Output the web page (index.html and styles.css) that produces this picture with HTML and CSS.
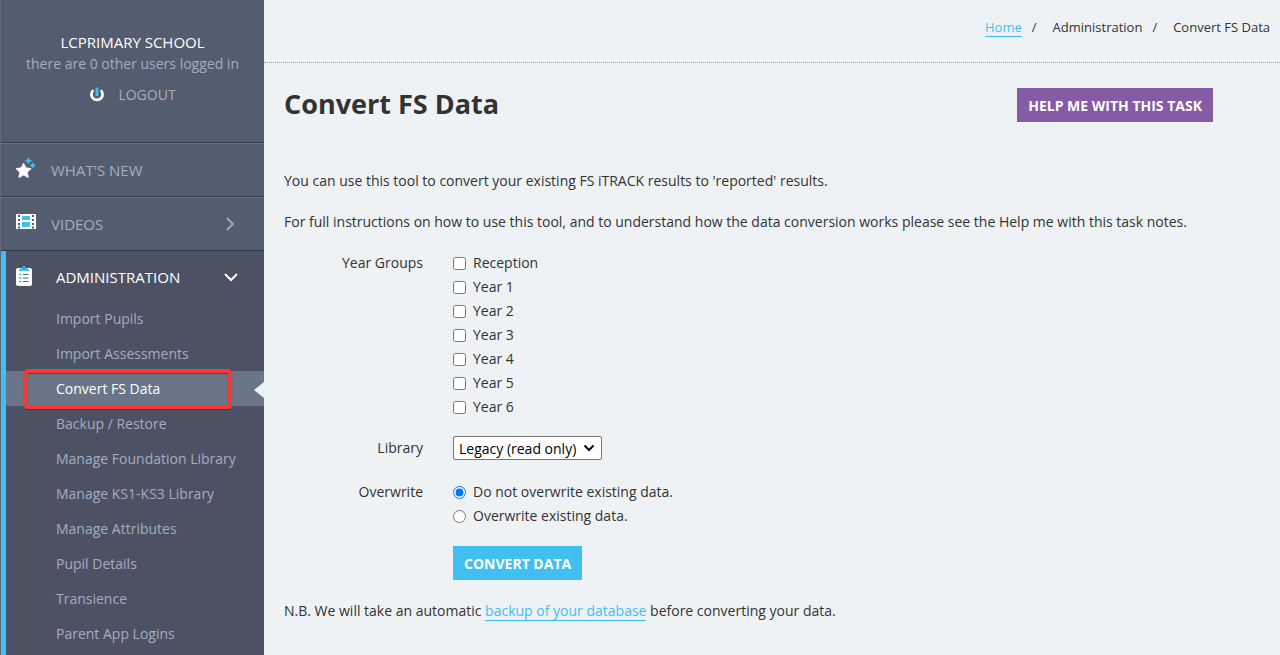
FILE: index.html
```html
<!DOCTYPE html>
<html lang="en">
<head>
<meta charset="utf-8">
<title>Convert FS Data</title>
<link rel="stylesheet" href="styles.css">
</head>
<body>
<div class="app">
  <aside class="sidebar">
    <div class="user">
      <div class="school">LCPRIMARY SCHOOL</div>
      <div class="status">there are 0 other users logged in</div>
      <a class="logout" href="#">
        <svg width="16" height="16" viewBox="0 0 16 16" fill="none" stroke-width="2.8"><path d="M4.200 3.200A5.600 5.600 0 1 0 11.800 3.200" stroke="#fff"/><path d="M8 .5V9" stroke="#3fbff2" stroke-width="3"/></svg>
        <span>LOGOUT</span>
      </a>
    </div>
    <nav>
      <a class="item" href="#">
        <svg class="icon" width="20" height="22" viewBox="0 0 20 22"><path d="M7.500 6l2.400 4.800 5.300.8-3.800 3.700.9 5.300-4.800-2.500-4.700 2.500.9-5.300L0 11.600l5.200-.8z" fill="#fff" stroke="#fff" stroke-width=".8" stroke-linejoin="round"/><path d="M12.500.5l1 2.300 2.300 1-2.300 1-1 2.300-1-2.300-2.300-1 2.300-1zM16.800 5.700l.9 1.900 1.900.9-1.900.9-.9 1.900-.9-1.900-1.900-.9 1.900-.9z" fill="#3fbff2" stroke="#3fbff2" stroke-width=".5"/></svg>
        <span>WHAT'S NEW</span>
      </a>
      <a class="item" href="#">
        <svg class="icon" width="20" height="22" viewBox="0 0 20 22"><path d="M0 3h20v15H0z" fill="#fff"/><path d="M6 5h8v4H6zM6 11h8v5H6z" fill="#3fbff2"/><path d="M2 4h2v2H2zM2 8h2v2H2zM2 12h2v2H2zM2 15.500h2v2H2zM16 4h2v2h-2zM16 8h2v2h-2zM16 12h2v2h-2zM16 15.500h2v2h-2z" fill="#535d6f"/></svg>
        <span>VIDEOS</span>
        <svg class="arrow" width="16" height="16" viewBox="0 0 16 16" fill="none" stroke="#a3adc2" stroke-width="1.800"><path d="M5 2l6 6-6 6"/></svg>
      </a>
      <div class="group">
        <a class="item open" href="#">
          <svg class="icon" width="20" height="22" viewBox="0 0 20 22"><rect y="4" width="16" height="18" rx="2" fill="#fff"/><path d="M3 7V5l3-1q.5-2 2-2t2 2l3 1v2z" fill="#3fbff2"/><circle cx="8" cy="4.300" r=".8" fill="#4c5264"/><path d="M3 10.500h2.500M3 14h2.500M3 17.500h2.500" stroke="#3fbff2" stroke-width="1.500"/><path d="M7 10.500h5.500M7 14h5.500M7 17.500h5.500" stroke="#5d6678" stroke-width="1.200"/></svg>
          <span>ADMINISTRATION</span>
          <svg class="arrow" width="16" height="16" viewBox="0 0 16 16" fill="none" stroke="#fff" stroke-width="2"><path d="M2 5l6 6 6-6"/></svg>
        </a>
        <ul class="submenu">
          <li><a href="#">Import Pupils</a></li>
          <li><a href="#">Import Assessments</a></li>
          <li><a class="current" href="#">Convert FS Data</a></li>
          <li><a href="#">Backup / Restore</a></li>
          <li><a href="#">Manage Foundation Library</a></li>
          <li><a href="#">Manage KS1-KS3 Library</a></li>
          <li><a href="#">Manage Attributes</a></li>
          <li><a href="#">Pupil Details</a></li>
          <li><a href="#">Transience</a></li>
          <li><a href="#">Parent App Logins</a></li>
        </ul>
      </div>
    </nav>
  </aside>
  <main class="main">
    <nav class="crumbs">
      <a class="link" href="#">Home</a><i>/</i><span>Administration</span><i>/</i><span>Convert FS Data</span>
    </nav>
    <div class="content">
      <header class="head">
        <h1>Convert FS Data</h1>
        <button class="btn help" type="button">HELP ME WITH THIS TASK</button>
      </header>
      <p>You can use this tool to convert your existing FS iTRACK results to 'reported' results.</p>
      <p>For full instructions on how to use this tool, and to understand how the data conversion works please see the Help me with this task notes.</p>
      <form class="form">
        <div class="row" role="group" aria-labelledby="years">
          <span class="label" id="years">Year Groups</span>
          <div class="options">
            <label><input type="checkbox">Reception</label>
            <label><input type="checkbox">Year 1</label>
            <label><input type="checkbox">Year 2</label>
            <label><input type="checkbox">Year 3</label>
            <label><input type="checkbox">Year 4</label>
            <label><input type="checkbox">Year 5</label>
            <label><input type="checkbox">Year 6</label>
          </div>
        </div>
        <div class="row">
          <label class="label" for="library">Library</label>
          <select id="library"><option>Legacy (read only)</option></select>
        </div>
        <div class="row" role="radiogroup" aria-labelledby="overwrite">
          <span class="label" id="overwrite">Overwrite</span>
          <div class="options">
            <label><input type="radio" name="overwrite" checked>Do not overwrite existing data.</label>
            <label><input type="radio" name="overwrite">Overwrite existing data.</label>
          </div>
        </div>
        <div class="actions"><button class="btn" type="button">CONVERT DATA</button></div>
      </form>
      <p>N.B. We will take an automatic <a class="link" href="#">backup of your database</a> before converting your data.</p>
    </div>
  </main>
</div>
</body>
</html>
```
FILE: styles.css
```css
* { box-sizing: border-box; }
body {
  margin: 0;
  background: #eef2f5;
  color: #333;
  font: 14px/24px "Open Sans", sans-serif;
}
a { color: inherit; text-decoration: none; }
.app { display: flex; height: 100vh; overflow: hidden; }

.sidebar {
  flex: 0 0 264px;
  border-left: 1px solid #5f697b;
  background: #535d6f;
  color: #a3adc2;
}
.user {
  height: 143px;
  padding-top: 32px;
  border-bottom: 1px solid #2d3b4d;
  text-align: center;
  line-height: 21px;
}
.school { color: #fff; font-size: 15px; }
.logout {
  display: flex;
  justify-content: center;
  align-items: center;
  gap: 13px;
  margin-top: 10px;
}
.item {
  display: flex;
  align-items: center;
  height: 54px;
  padding: 0 26px 0 15px;
  border-top: 1px solid #6b7588;
  border-bottom: 1px solid #2d3b4d;
  font-size: 15px;
}
.icon { margin: 0 15px 4px 0; }
.arrow { margin-left: auto; }
.group {
  min-height: 100vh;
  border-left: 5px solid #3fbff2;
  background: #4c5264;
}
.open {
  height: 50px;
  padding: 2px 25px 0 10px;
  border: 0;
  color: #fff;
}
.open .icon { margin-right: 20px; }
.submenu { margin: 0; padding: 0; list-style: none; }
.submenu a {
  display: block;
  padding-left: 50px;
  line-height: 35px;
}
.submenu .current {
  position: relative;
  background: #6a7588;
  color: #fff;
}
.current::before {
  content: "";
  box-sizing: border-box;
  position: absolute;
  top: -2px;
  left: 18px;
  width: 208px;
  height: 40px;
  border: 4px solid #f23a3a;
  border-radius: 4px;
  box-shadow: 0 1px 1px #333a, inset 0 1px 1px #333a;
}
.current::after {
  content: "";
  position: absolute;
  top: 11px;
  right: 0;
  border: solid transparent;
  border-width: 8px 10px 8px 0;
  border-right-color: #eef2f5;
}

.main { flex: 1; min-width: 0; }
.crumbs {
  display: flex;
  justify-content: flex-end;
  align-items: flex-start;
  height: 63px;
  padding: 18px 10px 0;
  border-bottom: 1px dotted #999;
  font-size: 13px;
  line-height: 18px;
}
.crumbs i { margin: 0 16px 0 10px; font-style: normal; }
.link { border-bottom: 1px solid #3fbff2; color: #3fbff2; }
.content { padding: 25px 20px 0; }
.head {
  display: flex;
  justify-content: space-between;
  align-items: flex-start;
  margin: 0 47px 47px 0;
}
h1 { margin: 0; font-size: 27px; line-height: 32px; }
.btn {
  height: 34px;
  padding: 0 11px;
  border: 0;
  background: #41bff1;
  color: #fff;
  font: bold 14px "Open Sans", sans-serif;
}
.help { background: #865ba5; }
p { margin: 0 0 17px; }
.row { display: flex; gap: 30px; margin-bottom: 17px; }
.row:nth-child(2) { margin-bottom: 20px; }
.label { flex: 0 0 139px; text-align: right; }
.options label { display: flex; align-items: center; }
.options input { width: 13px; height: 13px; margin: 1px 7px 0 0; }
select {
  appearance: none;
  width: 149px;
  height: 24px;
  padding: 0 5px;
  border: 1px solid #767676;
  border-radius: 2px;
  background: #fff url("data:image/svg+xml,%3Csvg xmlns='http://www.w3.org/2000/svg' width='12' height='8' fill='none' stroke='%23000' stroke-width='2'%3E%3Cpath d='M1.500 1.500L6 6l4.500-4.500'/%3E%3C/svg%3E") no-repeat right 6px center;
  color: #000;
  font: 14px "Open Sans", sans-serif;
}
.actions { margin: 18px 0 19px 169px; line-height: 0; }
```
